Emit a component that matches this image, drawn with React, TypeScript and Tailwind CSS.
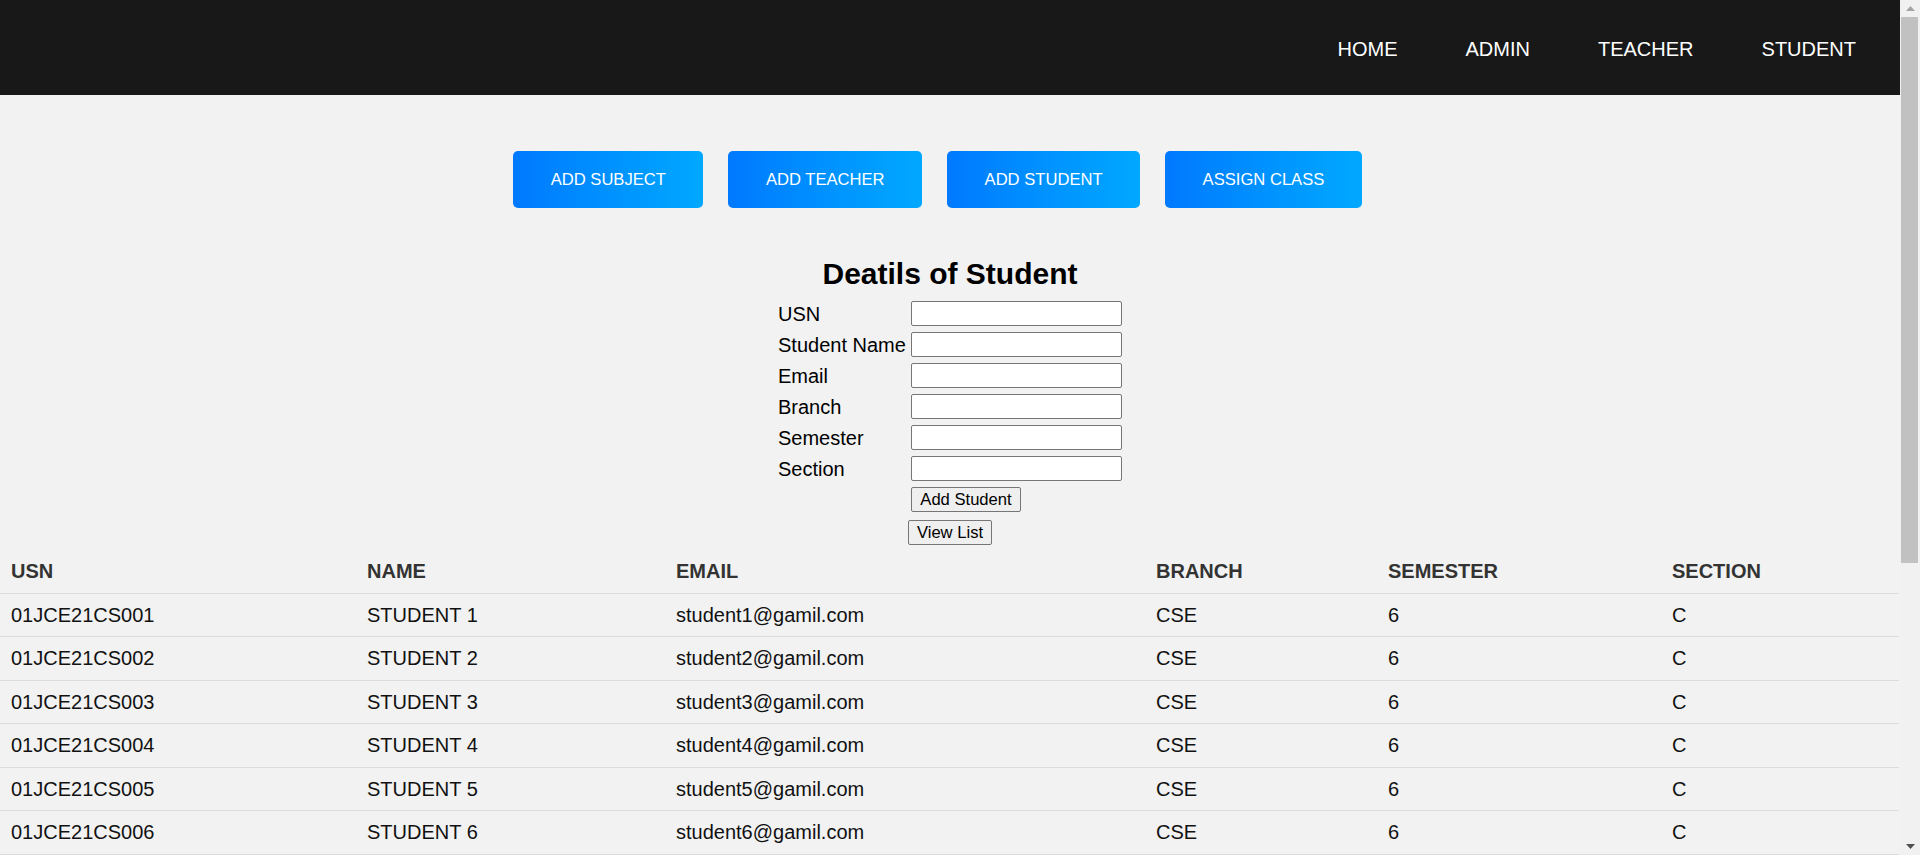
import React from "react";

const rows = Array.from({ length: 16 }, (_, i) => {
  const n = i + 1;
  return {
    usn: `01JCE21CS${String(n).padStart(3, "0")}`,
    name: `STUDENT ${n}`,
    email: `student${n}@gamil.com`,
    branch: "CSE",
    sem: "6",
    sec: "C",
  };
});

const fields = ["USN", "Student Name", "Email", "Branch", "Semester", "Section"];

function Scrollbar() {
  return (
    <div className="flex h-[855px] w-[20px] shrink-0 flex-col bg-[#f1f1f1]">
      <div className="flex h-[17px] items-center justify-center">
        <svg width="9" height="5" viewBox="0 0 9 5">
          <polygon points="4.5,0 9,5 0,5" fill="#a3a3a3" />
        </svg>
      </div>
      <div className="flex-1">
        <div className="ml-[1px] mr-[2px] h-[546px] bg-[#c1c1c1]" />
      </div>
      <div className="flex h-[17px] items-center justify-center">
        <svg width="9" height="5" viewBox="0 0 9 5">
          <polygon points="0,0 9,0 4.5,5" fill="#505050" />
        </svg>
      </div>
    </div>
  );
}

export default function App() {
  return (
    <div className="flex h-[855px] overflow-hidden bg-[#f2f2f2] font-['Liberation_Sans',Arial,sans-serif] text-black">
      <main className="h-[855px] w-[1900px] shrink-0 overflow-y-auto [scrollbar-width:none]">
        <nav className="flex h-[95px] items-center justify-end gap-[68px] bg-[#181818] pr-[44px] pt-[3px] text-[20px] text-white">
          <a className="leading-[23px]">HOME</a>
          <a className="leading-[23px]">ADMIN</a>
          <a className="leading-[23px]">TEACHER</a>
          <a className="leading-[23px]">STUDENT</a>
        </nav>

        <div className="flex justify-center pt-[56px]">
          {["ADD SUBJECT", "ADD TEACHER", "ADD STUDENT", "ASSIGN CLASS"].map((t) => (
            <button
              key={t}
              className="mr-[25px] flex h-[57px] items-center rounded-[5px] bg-linear-to-r from-[#0079ff] to-[#00a8ff] px-[37.5px] text-[16.6px] leading-[18px] text-white"
            >
              {t}
            </button>
          ))}
        </div>

        <h2 className="mt-[49px] text-center text-[30px] font-bold leading-[34px]">Deatils of Student</h2>

        <div className="mt-[10px] flex justify-center">
          <div className="flex w-[344px] flex-col gap-[6px]">
            {fields.map((f) => (
              <div key={f} className="flex h-[25px] items-center">
                <span className="w-[133px] pt-[1px] text-[20px] leading-[23px]">{f}</span>
                <input className="h-[25px] w-[211px] rounded-[2px] border border-[#767676] bg-white" />
              </div>
            ))}
            <div className="flex">
              <span className="w-[133px]" />
              <button className="h-[25px] w-[110px] rounded-[2px] border border-[#767676] bg-[#efefef] text-[16.6px] leading-[18px]">
                Add Student
              </button>
            </div>
          </div>
        </div>
        <div className="mt-[8px] flex justify-center">
          <button className="h-[25px] w-[84px] rounded-[2px] border border-[#767676] bg-[#efefef] text-[16.6px] leading-[18px]">
            View List
          </button>
        </div>

        <table className="mt-[5px] w-[1899px] table-fixed border-collapse text-left text-[20px] leading-[22.5px]">
          <colgroup>
            <col className="w-[356px]" />
            <col className="w-[309px]" />
            <col className="w-[480px]" />
            <col className="w-[232px]" />
            <col className="w-[284px]" />
            <col className="w-[238px]" />
          </colgroup>
          <thead>
            <tr className="border-b border-[#dcdcdc] text-[#333]">
              {["USN", "NAME", "EMAIL", "BRANCH", "SEMESTER", "SECTION"].map((h) => (
                <th key={h} className="px-[11px] py-[10px] font-bold">
                  {h}
                </th>
              ))}
            </tr>
          </thead>
          <tbody className="text-[#111]">
            {rows.map((r) => (
              <tr key={r.usn} className="border-b border-[#dcdcdc]">
                <td className="px-[11px] py-[10px]">{r.usn}</td>
                <td className="px-[11px] py-[10px]">{r.name}</td>
                <td className="px-[11px] py-[10px]">{r.email}</td>
                <td className="px-[11px] py-[10px]">{r.branch}</td>
                <td className="px-[11px] py-[10px]">{r.sem}</td>
                <td className="px-[11px] py-[10px]">{r.sec}</td>
              </tr>
            ))}
          </tbody>
        </table>
      </main>
      <Scrollbar />
    </div>
  );
}
